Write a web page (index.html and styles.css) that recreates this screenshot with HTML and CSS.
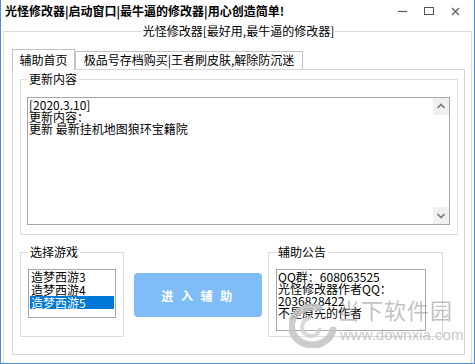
FILE: index.html
```html
<!DOCTYPE html>
<html lang="zh-CN">
<head>
    <meta charset="UTF-8">
    <title>光怪修改器</title>
    <link rel="stylesheet" href="styles.css">
</head>
<body>

<div class="window">
    <!-- Title bar -->
    <div class="titlebar">
        <span class="title">光怪修改器|启动窗口|最牛逼的修改器|用心创造简单!</span>
        <div class="controls">
            <svg class="ctl" width="30" height="22" viewBox="0 0 30 22"><line x1="9" y1="11.5" x2="18" y2="11.5" stroke="#555" stroke-width="1.2"/></svg>
            <svg class="ctl" width="30" height="22" viewBox="0 0 30 22"><rect x="8.5" y="7.5" width="9" height="7" fill="none" stroke="#555" stroke-width="1"/></svg>
            <svg class="ctl" width="30" height="22" viewBox="0 0 30 22"><path d="M8 8 L15 15 M15 8 L8 15" stroke="#555" stroke-width="1.1"/></svg>
        </div>
    </div>

    <!-- Main frame -->
    <fieldset class="frame">
        <legend>光怪修改器[最好用,最牛逼的修改器]</legend>

        <div class="tabs">
            <div class="tab active">辅助首页</div>
            <div class="tab">极品号存档购买|王者刷皮肤,解除防沉迷</div>
        </div>

        <div class="panel">
            <fieldset class="group update">
                <legend>更新内容</legend>
                <div class="memo">
                    <div class="memo-text">
                        <div>[2020.3.10]</div>
                        <div>更新内容：</div>
                        <div>更新 最新挂机地图狼环宝籍院</div>
                    </div>
                    <div class="scrollbar">
                        <span class="arrow"><svg width="16" height="17" viewBox="0 0 16 17"><path d="M4.5 10 L8 6.5 L11.5 10" fill="none" stroke="#777" stroke-width="1.6"/></svg></span>
                        <span class="arrow"><svg width="16" height="17" viewBox="0 0 16 17"><path d="M4.5 7 L8 10.5 L11.5 7" fill="none" stroke="#777" stroke-width="1.6"/></svg></span>
                    </div>
                </div>
            </fieldset>

            <div class="bottom">
                <fieldset class="group games">
                    <legend>选择游戏</legend>
                    <ul class="listbox">
                        <li>造梦西游3</li>
                        <li>造梦西游4</li>
                        <li class="selected">造梦西游5</li>
                    </ul>
                </fieldset>

                <button class="enter">进 入 辅 助</button>

                <fieldset class="group notice">
                    <legend>辅助公告</legend>
                    <div class="notice-box">
                        <div>QQ群：608063525</div>
                        <div>光怪修改器作者QQ：</div>
                        <div>2036828422</div>
                        <div>不是原先的作者</div>
                    </div>
                </fieldset>
            </div>
        </div>
    </fieldset>

    <!-- Site watermark -->
    <div class="watermark">
        <svg class="wm-logo" width="50" height="44" viewBox="0 0 50 44">
            <path d="M30 4 A21 19 0 1 0 44 26" fill="none" stroke="#c4c4c4" stroke-width="7" stroke-linecap="round"/>
            <path d="M22 14 A9 9 0 1 0 31 24" fill="none" stroke="#d2d2d2" stroke-width="4"/>
        </svg>
        <div class="wm-name">当下软件园</div>
        <div class="wm-url">www.downxia.com</div>
    </div>
</div>

</body>
</html>
```

FILE: styles.css
```css
body {
    margin: 0;
    font-family: "Noto Sans CJK SC", "Noto Sans", sans-serif;
    font-size: 12px;
    line-height: 12px;
    color: #000;
    background: #fff;
}
.window {
    position: relative;
    width: 475px;
    height: 364px;
    box-sizing: border-box;
    border: 1px solid #4a8fd8;
    border-top: none;
    background: #fff;
    overflow: hidden;
}
.titlebar {
    height: 22px;
    display: flex;
    align-items: center;
    padding-left: 4px;
}
.title {
    font-weight: bold;
    white-space: nowrap;
}
.controls {
    margin-left: auto;
    display: flex;
}
.ctl {
    display: block;
    margin-left: -2px;
}
.ctl:first-child {
    margin-right: -1px;
}

/* fieldsets */
fieldset {
    margin: 0;
    min-width: 0;
}
legend {
    padding: 0 2px;
    line-height: 12px;
}
.frame {
    margin: 3px 2px 0;
    padding: 12px 6px 8px 8px;
    border: 1px solid #dcdcdc;
    border-bottom: none;
}
.frame > legend {
    margin: 0 auto;
    padding: 0 1px;
}

/* tabs */
.tabs {
    display: flex;
    align-items: flex-end;
}
.tab {
    border: 1px solid #c2c2c2;
    border-bottom: none;
    background: #fff;
    text-align: center;
    white-space: nowrap;
    padding: 2px 0 3px;
}
.tab.active {
    position: relative;
    z-index: 1;
    width: 61px;
    padding: 4px 0;
    margin-bottom: -1px;
}
.tab:not(.active) {
    width: 226px;
}
.panel {
    border: 1px solid #d4d4d4;
    padding: 3px 6px 17px 7px;
}
.group {
    border: 1px solid #dcdcdc;
}
.update {
    padding: 12px 7px 9px 6px;
}

/* memo box with scrollbar */
.memo {
    display: flex;
    height: 126px;
    border: 1px solid #a5a5ad;
}
.memo-text {
    flex: 1;
    padding: 1px 0 0 1px;
}
.scrollbar {
    width: 16px;
    display: flex;
    flex-direction: column;
    justify-content: space-between;
}
.arrow {
    display: block;
    height: 17px;
    background: #f0f0f0;
}
.arrow svg {
    display: block;
}

/* bottom row */
.bottom {
    display: flex;
    margin-top: 11px;
}
.games {
    width: 88px;
    padding: 11px 7px 0;
}
.listbox {
    list-style: none;
    margin: 0;
    padding: 0 1px;
    height: 47px;
    border: 1px solid #a8a8a8;
}
.listbox li {
    height: 13px;
    line-height: 13px;
    padding-left: 1px;
}
.listbox li.selected {
    background: #0078d7;
    color: #fff;
}
.enter {
    align-self: flex-start;
    margin: 27px 6px 0 10px;
    width: 128px;
    height: 44px;
    border: none;
    border-radius: 4px;
    background: #80bdf8;
    color: #fff;
    font-family: inherit;
    font-size: 12px;
    font-weight: bold;
    letter-spacing: 2.5px;
    padding: 0;
}
.notice {
    width: 150px;
    padding: 11px 16px 5px 7px;
}
.notice-box {
    height: 59px;
    border: 1px solid #a8a8a8;
    padding: 1px 1px 0;
}

/* site watermark over the notice area */
.watermark {
    position: absolute;
    left: 287px;
    top: 296px;
    pointer-events: none;
}
.wm-logo {
    position: absolute;
    left: 1px;
    top: 8px;
    opacity: 0.85;
}
.wm-name {
    position: absolute;
    left: 50px;
    top: 0;
    font-size: 22px;
    line-height: 26px;
    letter-spacing: 1px;
    color: rgba(140, 140, 140, 0.55);
    white-space: nowrap;
}
.wm-url {
    position: absolute;
    left: 52px;
    top: 31px;
    font-family: "Liberation Sans", sans-serif;
    font-size: 15px;
    line-height: 15px;
    color: rgba(150, 150, 150, 0.55);
    white-space: nowrap;
}
```
